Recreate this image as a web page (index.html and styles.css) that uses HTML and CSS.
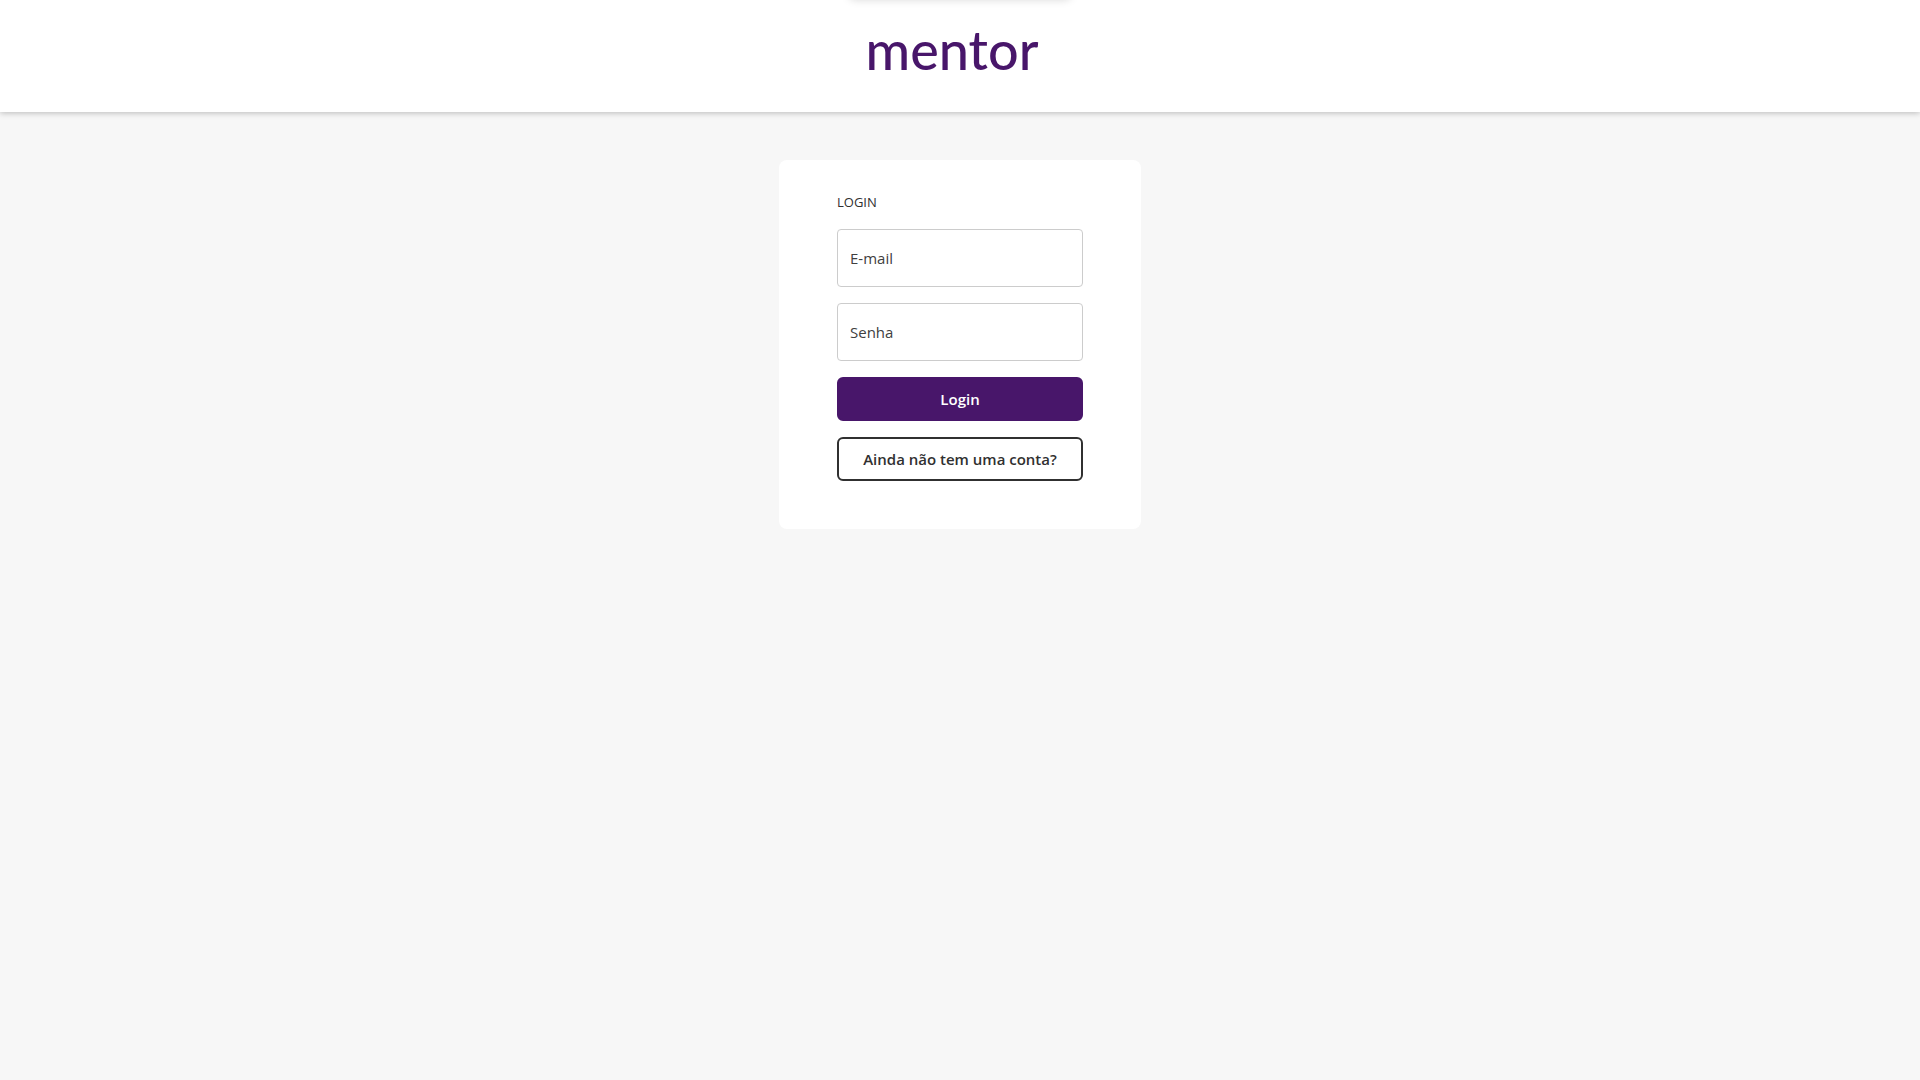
FILE: index.html
```html
<!DOCTYPE html>
<html lang="pt-BR">
<head>
<meta charset="utf-8">
<meta name="viewport" content="width=device-width, initial-scale=1">
<title>Mentor - Login</title>
<link rel="stylesheet" href="styles.css">
</head>
<body>
<div class="notice"></div>
<header class="header">
  <a class="logo" href="#">mentor</a>
</header>
<main class="main">
  <form class="card">
    <h1 class="title">LOGIN</h1>
    <input class="field" type="email" placeholder="E-mail" aria-label="E-mail">
    <input class="field" type="password" placeholder="Senha" aria-label="Senha">
    <button class="button primary" type="submit">Login</button>
    <button class="button outline" type="button">Ainda não tem uma conta?</button>
  </form>
</main>
</body>
</html>
```
FILE: styles.css
```css
* {
  box-sizing: border-box;
}

body {
  margin: 0;
  min-height: 100vh;
  display: flex;
  flex-direction: column;
  background: #f7f7f7;
  color: #303030;
  font-family: "Segoe UI", "Open Sans", "Noto Sans", sans-serif;
  font-size: 15px;
}

/* Message bar parked just above the window; only its shadow shows. */
.notice {
  position: absolute;
  z-index: 2;
  bottom: 100%;
  left: 50%;
  width: 224px;
  height: 48px;
  margin-left: -112px;
  border-radius: 8px;
  box-shadow: 0 0 8px rgba(0, 0, 0, 0.15);
}

.header {
  position: relative;
  display: flex;
  justify-content: center;
  padding: 18px 16px 30px 0;
  background: #fff;
  box-shadow: 0 1px 6px rgba(0, 0, 0, 0.25);
}

.logo {
  color: #48166a;
  font-family: Lato, sans-serif;
  font-size: 54px;
  font-weight: 500;
  line-height: 64px;
  text-decoration: none;
}

.main {
  flex: 1;
  padding: 48px 16px;
}

.card {
  display: flex;
  flex-direction: column;
  gap: 16px;
  max-width: 362px;
  margin: 0 auto;
  padding: 32px 58px 48px;
  border-radius: 8px;
  background: #fff;
}

.title {
  margin: 0;
  padding-bottom: 1px;
  font-size: 13px;
  font-weight: 500;
  line-height: 20px;
}

.field {
  width: 100%;
  height: 58px;
  padding: 0 12px;
  border: 1px solid #ccc;
  border-radius: 4px;
  background: #fff;
  color: inherit;
  font: inherit;
}

.field::placeholder {
  color: #404040;
  opacity: 1;
}

.button {
  height: 44px;
  padding: 0;
  border: 2px solid #303030;
  border-radius: 6px;
  background: #fff;
  color: #303030;
  font: inherit;
  font-weight: 600;
  cursor: pointer;
}

.primary {
  border-color: #48166a;
  background: #48166a;
  color: #fff;
}
```
